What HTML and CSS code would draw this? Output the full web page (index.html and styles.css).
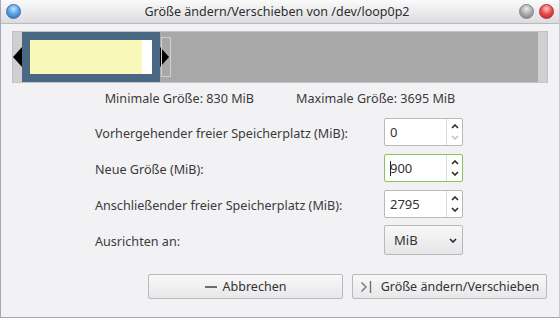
FILE: index.html
```
<!DOCTYPE html>
<html lang="de">
<head>
<meta charset="utf-8">
<title>Größe ändern/Verschieben</title>
<link rel="stylesheet" href="styles.css">
</head>
<body>
<div class="window">
  <div class="titlebar">
    <span class="orb orb-blue"></span>
    <span class="title">Größe ändern/Verschieben von /dev/loop0p2</span>
    <span class="orbs">
      <span class="orb orb-gray"></span>
      <span class="orb orb-red"></span>
    </span>
  </div>
  <div class="content">
    <div class="partbar">
      <div class="pb-edge"></div>
      <div class="pb-part"><div class="pb-used"></div><div class="pb-free"></div></div>
      <div class="pb-rest"></div>
      <div class="pb-edge"></div>
      <div class="arrow arrow-left"></div>
      <div class="arrow arrow-right"></div>
      <div class="handle"></div>
    </div>
    <div class="info">
      <span>Minimale Größe: 830 MiB</span>
      <span>Maximale Größe: 3695 MiB</span>
    </div>
    <div class="form">
      <label class="lbl">Vorhergehender freier Speicherplatz (MiB):</label>
      <div class="spin">
        <span class="val">0</span>
        <span class="btns">
          <svg class="chev" viewBox="0 0 8 5" width="8" height="5"><path d="M1 4 L4 1 L7 4" /></svg>
          <svg class="chev dis" viewBox="0 0 8 5" width="8" height="5"><path d="M1 1 L4 4 L7 1" /></svg>
        </span>
      </div>
      <label class="lbl">Neue Größe (MiB):</label>
      <div class="spin focus">
        <span class="val"><span class="caret"></span>900</span>
        <span class="btns">
          <svg class="chev" viewBox="0 0 8 5" width="8" height="5"><path d="M1 4 L4 1 L7 4" /></svg>
          <svg class="chev" viewBox="0 0 8 5" width="8" height="5"><path d="M1 1 L4 4 L7 1" /></svg>
        </span>
      </div>
      <label class="lbl">Anschließender freier Speicherplatz (MiB):</label>
      <div class="spin">
        <span class="val">2795</span>
        <span class="btns">
          <svg class="chev" viewBox="0 0 8 5" width="8" height="5"><path d="M1 4 L4 1 L7 4" /></svg>
          <svg class="chev" viewBox="0 0 8 5" width="8" height="5"><path d="M1 1 L4 4 L7 1" /></svg>
        </span>
      </div>
      <label class="lbl">Ausrichten an:</label>
      <div class="combo">
        <span>MiB</span>
        <svg class="chev" viewBox="0 0 8 5" width="8" height="5"><path d="M1 1 L4 4 L7 1" /></svg>
      </div>
    </div>
    <div class="buttons">
      <button class="btn"><span class="ico-dash"></span>Abbrechen</button>
      <button class="btn btn-wide-gap"><svg class="ico-resize" viewBox="0 0 12 14" width="12" height="14"><path d="M1.5 2.5 L6 7 L1.5 11.5" /><path d="M10.5 1 V13" /></svg>Größe ändern/Verschieben</button>
    </div>
  </div>
</div>
</body>
</html>
```

FILE: styles.css
```
* { box-sizing: border-box; }
html, body { margin: 0; padding: 0; }
body {
  width: 560px;
  height: 318px;
  overflow: hidden;
  font-family: "Noto Sans", "Open Sans", sans-serif;
  font-size: 12.6px;
  color: #3a3a3a;
  background: #f2f2f4;
}
.window {
  width: 560px;
  height: 318px;
  border-left: 1px solid #a9a6b8;
  border-bottom: 1px solid #a9a6b8;
  border-right: 1px solid #c9c9cf;
  display: flex;
  flex-direction: column;
  background: #f2f2f4;
}
.titlebar {
  height: 24px;
  flex: none;
  display: flex;
  align-items: center;
  padding: 0 5px 0 5px;
  background: linear-gradient(#fafafa, #e9e9eb 60%, #dcdcdf);
  border-bottom: 1px solid #b9b9bf;
}
.title {
  flex: 1;
  text-align: center;
  font-size: 12.5px;
  color: #2e2e2e;
  padding-left: 14px;
}
.orbs { display: flex; gap: 5px; }
.orb {
  width: 15px;
  height: 15px;
  border-radius: 50%;
  display: inline-block;
}
.orb-blue {
  background: radial-gradient(circle at 50% 30%, #c6e4ff 0, #5fa4e6 45%, #2466b6 100%);
  border: 1px solid #3f6fa6;
}
.orb-gray {
  background: radial-gradient(circle at 50% 30%, #ececec 0, #aaaaaa 50%, #767676 100%);
  border: 1px solid #868686;
}
.orb-red {
  background: radial-gradient(circle at 50% 30%, #ffcaca 0, #ee5050 45%, #b41c1c 100%);
  border: 1px solid #aa3434;
}
.content {
  flex: 1;
  display: flex;
  flex-direction: column;
  padding: 7px 11px 0 11px;
}
.partbar {
  position: relative;
  height: 52px;
  display: flex;
  border: 1px solid #c2c2c6;
  background: #d0d0d0;
}
.pb-edge { width: 9px; background: #d0d0d0; flex: none; }
.pb-part {
  width: 138px;
  flex: none;
  border: 8px solid #4a6783;
  display: flex;
  background: #fff;
}
.pb-used { width: 112px; background: #f8f8b8; }
.pb-free { flex: 1; background: #fff; }
.pb-rest { flex: 1; background: #a8a8a8; }
.arrow {
  position: absolute;
  top: 15px;
  width: 0;
  height: 0;
  border-top: 10px solid transparent;
  border-bottom: 10px solid transparent;
}
.arrow-left { left: 0; border-right: 9px solid #000; }
.arrow-right { left: 147px; border-left: 9px solid #000; }
.handle {
  position: absolute;
  left: 148px;
  top: 5px;
  width: 10px;
  height: 40px;
  border: 1px solid #cfcfcf;
}
.info {
  margin-top: 8px;
  height: 16px;
  display: flex;
  justify-content: center;
  gap: 42px;
  line-height: 16px;
}
.form {
  margin-top: 7px;
  margin-left: 83px;
  display: grid;
  grid-template-columns: 289px 79px;
  grid-auto-rows: 36px;
  align-items: center;
}
.lbl { padding-top: 2px; }
.spin {
  height: 28px;
  display: flex;
  background: #fff;
  border: 1px solid #b9b9bd;
  border-radius: 2px;
}
.spin.focus { border-color: #86c35a; }
.val {
  flex: 1;
  display: flex;
  align-items: center;
  padding-left: 5px;
  font-size: 13px;
  color: #333;
}
.caret {
  width: 1px;
  height: 15px;
  background: #222;
  margin-right: -1px;
}
.btns {
  width: 16px;
  border-left: 1px solid #dadade;
  display: flex;
  flex-direction: column;
  justify-content: space-around;
  align-items: center;
  padding: 2px 0;
}
.chev { fill: none; stroke: #2a2a2a; stroke-width: 1.6; }
.chev.dis { stroke: #c4c4c8; }
.combo {
  height: 30px;
  display: flex;
  align-items: center;
  justify-content: space-between;
  padding: 0 5px 0 9px;
  border: 1px solid #b9b9bd;
  border-radius: 2px;
  background: linear-gradient(#f8f8f8, #e6e6e8);
  font-size: 13px;
  color: #333;
}
.buttons {
  margin-top: 16px;
  display: flex;
  justify-content: flex-end;
  gap: 9px;
  padding-right: 1px;
}
.btn {
  width: 195px;
  height: 25px;
  display: flex;
  align-items: center;
  justify-content: center;
  gap: 6px;
  font-family: inherit;
  font-size: 12.5px;
  color: #333;
  border: 1px solid #b9b9bd;
  border-radius: 2px;
  background: linear-gradient(#f8f8f8, #e8e8ea);
  padding: 0;
}
.btn-wide-gap { gap: 9px; }
.ico-dash {
  width: 12px;
  height: 2px;
  background: #6c6c6c;
}
.ico-resize { fill: none; stroke: #6c6c6c; stroke-width: 1.3; }
```
